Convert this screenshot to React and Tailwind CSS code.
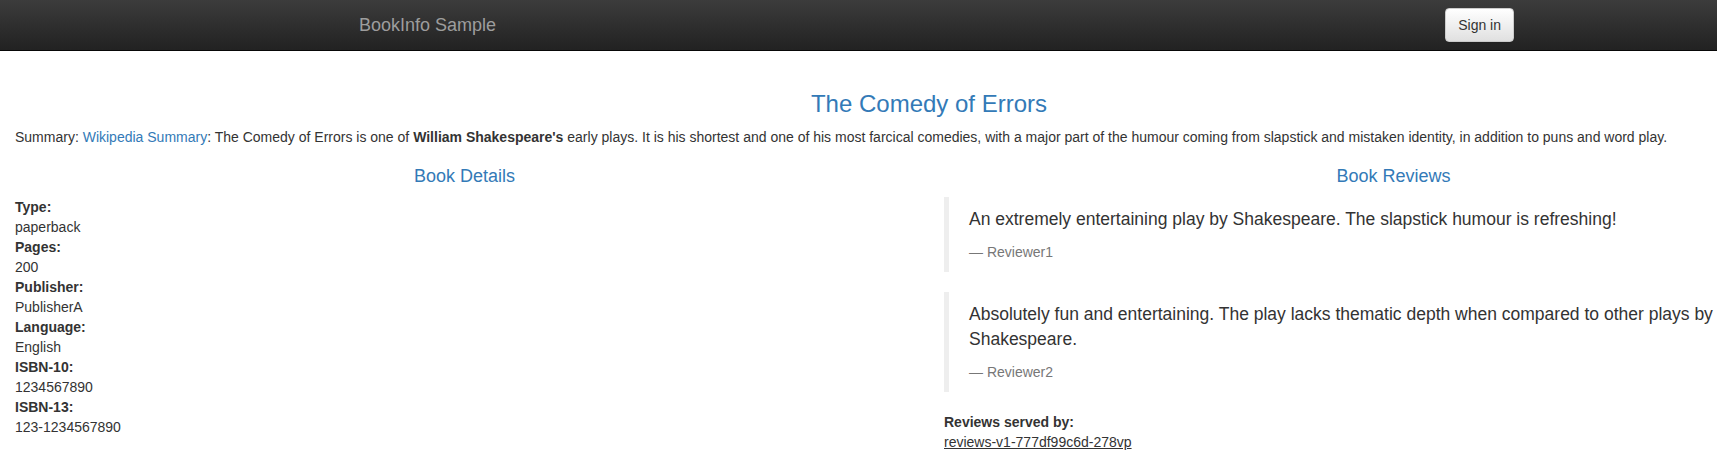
const details = [
  ['Type:', 'paperback'],
  ['Pages:', '200'],
  ['Publisher:', 'PublisherA'],
  ['Language:', 'English'],
  ['ISBN-10:', '1234567890'],
  ['ISBN-13:', '123-1234567890'],
];

const reviews = [
  {
    text: 'An extremely entertaining play by Shakespeare. The slapstick humour is refreshing!',
    author: 'Reviewer1',
  },
  {
    text: 'Absolutely fun and entertaining. The play lacks thematic depth when compared to other plays by Shakespeare.',
    author: 'Reviewer2',
  },
];

const App = () => {
  return (
    <div className="w-full overflow-hidden bg-white">
      <div className="flex w-[1858px] flex-col font-['Liberation_Sans',Arial,sans-serif] text-[14px] leading-[20px] text-[#333]">
        {/* Navbar */}
        <nav className="mb-[20px] h-[51px] border-b border-[#080808] bg-linear-to-b from-[#3c3c3c] to-[#222]">
          <div className="mx-auto flex w-[1170px] justify-between px-[15px]">
            <div className="-ml-[15px] h-[50px] p-[15px] text-[18px] leading-[20px] text-[#9d9d9d]">
              BookInfo Sample
            </div>
            <button className="-mr-[15px] mt-[8px] h-[34px] rounded-[4px] border border-[#ccc] bg-linear-to-b from-white to-[#e0e0e0] px-[12px] text-[14px] leading-[20px] text-[#333] shadow-[0_1px_1px_rgba(0,0,0,0.075)]">
              Sign in
            </button>
          </div>
        </nav>

        <div className="flex flex-col px-[15px]">
          <h3 className="mb-[10px] mt-[20px] text-center text-[24px] leading-[26.4px] text-[#337ab7]">
            The Comedy of Errors
          </h3>
          <p className="mb-[10px]">
            Summary: <a className="text-[#337ab7]">Wikipedia Summary</a>: The Comedy of Errors is one of{' '}
            <b>William Shakespeare's</b> early plays. It is his shortest and one of his most farcical comedies, with a
            major part of the humour coming from slapstick and mistaken identity, in addition to puns and word play.
          </p>
        </div>

        <div className="grid grid-cols-2 pt-[10px]">
          {/* Book details */}
          <div className="px-[15px]">
            <h4 className="mb-[10px] text-center text-[18px] leading-[19.8px] text-[#337ab7]">Book Details</h4>
            <dl>
              {details.map(([k, v]) => (
                <div key={k}>
                  <dt className="font-bold">{k}</dt>
                  <dd>{v}</dd>
                </div>
              ))}
            </dl>
          </div>

          {/* Book reviews */}
          <div className="px-[15px]">
            <h4 className="mb-[10px] text-center text-[18px] leading-[19.8px] text-[#337ab7]">Book Reviews</h4>
            {reviews.map((r) => (
              <blockquote key={r.author} className="mb-[20px] border-l-[5px] border-[#eee] px-[20px] py-[10px] pr-[24px]">
                <p className="mb-[10px] text-[17.5px] leading-[25px]">{r.text}</p>
                <footer className="text-[14px] leading-[20px] text-[#777]">— {r.author}</footer>
              </blockquote>
            ))}
            <dl>
              <dt className="font-bold">Reviews served by:</dt>
              <dd>
                <u>reviews-v1-777df99c6d-278vp</u>
              </dd>
            </dl>
          </div>
        </div>
      </div>
    </div>
  );
};

export default App;
